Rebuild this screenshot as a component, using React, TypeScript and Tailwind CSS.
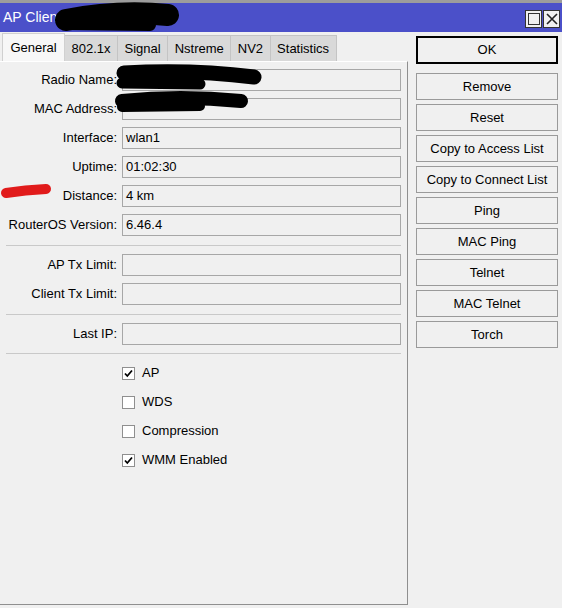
import React from "react";

const fieldsTop = [
  { label: "Radio Name:", value: "" },
  { label: "MAC Address:", value: "" },
  { label: "Interface:", value: "wlan1" },
  { label: "Uptime:", value: "01:02:30" },
  { label: "Distance:", value: "4 km" },
  { label: "RouterOS Version:", value: "6.46.4" },
];

const buttons = [
  "Remove",
  "Reset",
  "Copy to Access List",
  "Copy to Connect List",
  "Ping",
  "MAC Ping",
  "Telnet",
  "MAC Telnet",
  "Torch",
];

const tabs = ["802.1x", "Signal", "Nstreme", "NV2", "Statistics"];

function Field({ label, value }: { label: string; value: string }) {
  return (
    <div className="flex items-center h-[22px]">
      <div className="w-[118px] text-right pr-[1px] whitespace-nowrap">{label}</div>
      <div className="ml-[4px] w-[279px] h-[22px] border border-[#a7a7a7] px-[3px] flex items-center">
        {value}
      </div>
    </div>
  );
}

function Separator() {
  return <div className="ml-[6px] w-[395px] h-[1px] bg-[#c9c9c9]" />;
}

function Check({ label, checked }: { label: string; checked: boolean }) {
  return (
    <div className="flex items-center h-[22px] pl-[122px]">
      <div className="w-[13px] h-[13px] border border-[#8f8f8f] bg-white flex items-center justify-center">
        {checked && (
          <svg width="9" height="9" viewBox="0 0 9 9">
            <path d="M1 4.5 L3.3 7 L8 1.5" fill="none" stroke="#000" strokeWidth="1.8" />
          </svg>
        )}
      </div>
      <span className="ml-[7px]">{label}</span>
    </div>
  );
}

export default function App() {
  return (
    <div
      className="relative w-[562px] h-[608px] bg-[#f0f0f0] text-[13px] text-black overflow-hidden flex flex-col"
      style={{ fontFamily: '"Liberation Sans", Arial, sans-serif' }}
    >
      <div className="h-[3px] bg-[#9c9c9c]" />
      <div className="h-[29px] bg-[#4b50c9] flex items-center justify-between pl-[3px] pr-[2px]">
        <span className="text-white text-[14px]">AP Client</span>
        <div className="flex gap-[1px] mt-[3px]">
          <div className="w-[17px] h-[18px] border border-[#333] bg-[#f0f0f0] flex items-center justify-center">
            <div className="w-[12px] h-[12px] border border-[#333]" />
          </div>
          <div className="w-[17px] h-[18px] border border-[#333] bg-[#f0f0f0] flex items-center justify-center">
            <svg width="12" height="12" viewBox="0 0 12 12">
              <path d="M1 1 L11 11 M11 1 L1 11" stroke="#222" strokeWidth="1.6" />
            </svg>
          </div>
        </div>
      </div>

      <div className="flex flex-1">
        <div className="w-[408px] flex flex-col">
          <div className="flex items-end h-[29px] pl-[2px]">
            <div className="w-[63px] h-[28px] bg-[#f7f7f7] border-t border-l border-r border-[#d0d0d0] flex items-center justify-center">
              General
            </div>
            {tabs.map((t) => (
              <div
                key={t}
                className="h-[26px] px-[6.5px] bg-[#d9d9d9] border-r border-t border-[#c4c4c4] flex items-center"
              >
                {t}
              </div>
            ))}
          </div>
          <div className="flex-1 border-t border-white border-r border-r-[#8f8f8f] border-b border-b-[#8f8f8f] mb-[3px] pt-[7px] flex flex-col">
            <div className="flex flex-col gap-[7px]">
              {fieldsTop.map((f) => (
                <Field key={f.label} label={f.label} value={f.value} />
              ))}
            </div>
            <div className="mt-[9px] mb-[8px]">
              <Separator />
            </div>
            <div className="flex flex-col gap-[7px]">
              <Field label="AP Tx Limit:" value="" />
              <Field label="Client Tx Limit:" value="" />
            </div>
            <div className="mt-[9px] mb-[8px]">
              <Separator />
            </div>
            <Field label="Last IP:" value="" />
            <div className="my-[8px]">
              <Separator />
            </div>
            <div className="flex flex-col gap-[7px]">
              <Check label="AP" checked />
              <Check label="WDS" checked={false} />
              <Check label="Compression" checked={false} />
              <Check label="WMM Enabled" checked />
            </div>
          </div>
        </div>

        <div className="ml-[8px] w-[142px] pt-[4px] flex flex-col">
          <div className="h-[28px] border-2 border-black flex items-center justify-center">OK</div>
          <div className="mt-[9px] flex flex-col gap-[4px]">
            {buttons.map((b) => (
              <div
                key={b}
                className="h-[27px] border border-[#9a9a9a] flex items-center justify-center whitespace-nowrap"
              >
                {b}
              </div>
            ))}
          </div>
        </div>
      </div>

      {/* redaction marks */}
      <svg className="absolute left-0 top-0 pointer-events-none" width="562" height="608">
        <path d="M66 20 Q118 10 168 15" stroke="#000" strokeWidth="22" strokeLinecap="round" fill="none" />
        <path d="M66 24 L150 25" stroke="#000" strokeWidth="12" strokeLinecap="round" />
        <path d="M124 73 Q190 69 254 77" stroke="#000" strokeWidth="15" strokeLinecap="round" fill="none" />
        <path d="M122 83 L200 84" stroke="#000" strokeWidth="11" strokeLinecap="round" />
        <path d="M122 101 Q180 95 241 101" stroke="#000" strokeWidth="14" strokeLinecap="round" fill="none" />
        <path d="M122 107 L200 106" stroke="#000" strokeWidth="10" strokeLinecap="round" />
        <path d="M6 193 Q25 190 46 189" stroke="#e11b1b" strokeWidth="10" strokeLinecap="round" fill="none" />
      </svg>
    </div>
  );
}
